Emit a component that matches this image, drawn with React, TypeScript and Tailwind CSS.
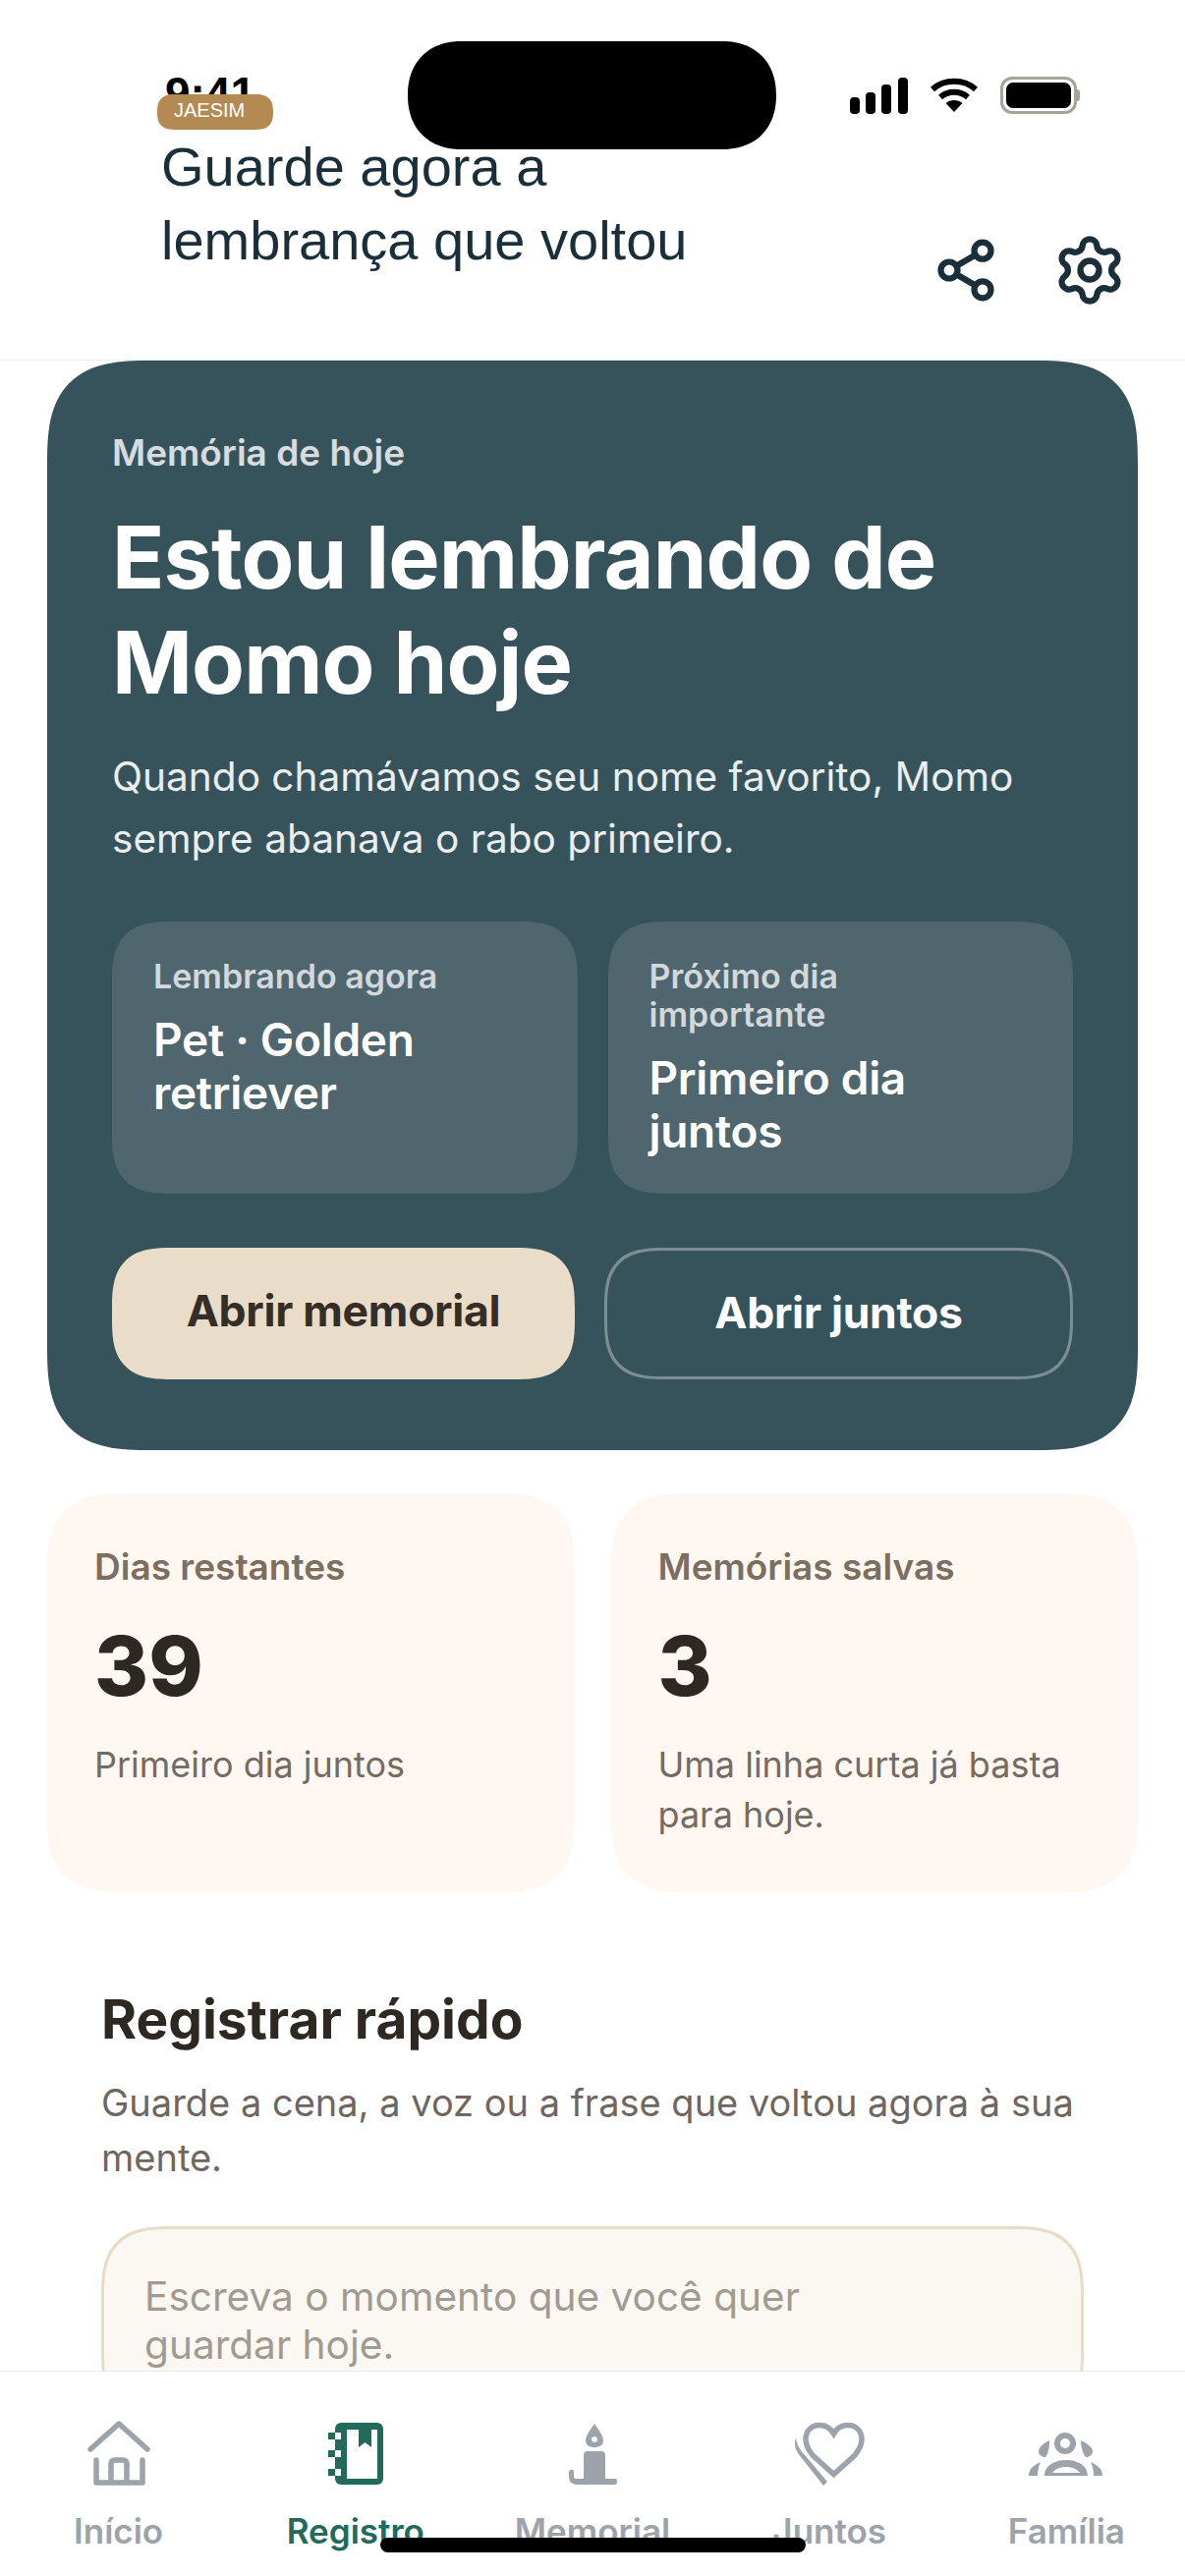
import { Settings, Share2 } from "lucide-react";

const GRAY = "#9ca3ab";
const GREEN = "#226a5a";

function HomeIcon() {
  return (
    <svg width="64" height="68" viewBox="0 0 64 68" fill="none" stroke={GRAY} strokeWidth="5.5" strokeLinecap="round" strokeLinejoin="round">
      <path d="M3 29 L32 3 L61 29" />
      <path d="M9 40 V63 H56 V40" />
      <path d="M24 62 V44 q0-4 4-4 h8 q4 0 4 4 V62" />
    </svg>
  );
}

function NotebookIcon() {
  return (
    <svg width="58" height="66" viewBox="0 0 58 66">
      <rect x="8" y="1" width="49" height="63" rx="6" fill={GREEN} />
      <rect x="20" y="8" width="31" height="50" fill="#fff" />
      <path d="M32 8 H45 V26 L38.5 21 L32 26 Z" fill={GREEN} />
      {[11, 29, 48].map((y) => (
        <g key={y}>
          <rect x="1" y={y} width="7" height="7" fill={GREEN} />
          <rect x="8" y={y} width="6" height="7" fill="#fff" />
        </g>
      ))}
    </svg>
  );
}

function CandleIcon() {
  return (
    <svg width="52" height="66" viewBox="0 0 52 66" fill={GRAY}>
      <path fillRule="evenodd" d="M28 2 C32 8 37 14 37 19 C37 24 33 26 28 26 C23 26 19 24 19 19 C19 14 24 8 28 2 Z M28 15 a3 3 0 1 0 .01 0 Z" />
      <path d="M17 34 q0-4 4-4 h14 q4 0 4 4 V58 H17 Z" />
      <path d="M4 49 q3-1 3 2 V56 q0 2 2 2 H49 q2 0 2 3 q0 3-2 3 H11 q-9 0-9-8 V51 q0-2 2-2 Z" />
    </svg>
  );
}

function HeartIcon() {
  return (
    <svg width="78" height="68" viewBox="0 0 78 68" fill="none">
      <path d="M43.5 13 C40 7 34 4.5 29 4.5 C20 4.5 15 11 15 19 C15 25 18 30 22 35 L43.5 54.5 L65 35 C69 30 72 25 72 19 C72 11 67 4.5 58 4.5 C53 4.5 47 7 43.5 13 Z" stroke={GRAY} strokeWidth="5.5" />
      <path d="M5 17 C2 26 6 32 11 38 L33 66 L37 62 L15 36 C9 30 6 25 5 17 Z" fill={GRAY} />
    </svg>
  );
}

function FamilyIcon() {
  return (
    <svg width="80" height="50" viewBox="0 0 80 50" fill={GRAY}>
      <circle cx="39" cy="14" r="8" fill="none" stroke={GRAY} strokeWidth="6" />
      <path d="M23 11 C18 13 12 18 12 22 C12 26 16 28 19 28 C22 24 23 18 23 11 Z" />
      <path d="M55 11 C60 13 67 18 67 22 C67 26 63 28 60 28 C57 24 55 18 55 11 Z" />
      <path fillRule="evenodd" d="M18 47 C18 37 28 31 40 31 C52 31 62 37 62 47 Z M26 44 H54 C51 40 46 38 40 38 C34 38 29 40 26 44 Z" />
      <path d="M2 47 C2 40 7 36 14 33 C12 37 11 42 11 47 Z" />
      <path d="M77 47 C77 40 72 36 65 33 C67 37 68 42 68 47 Z" />
    </svg>
  );
}

function StatusIcons() {
  return (
    <div className="absolute left-[865px] top-[78px] flex items-center gap-[22px]">
      <svg width="59" height="38" viewBox="0 0 59 38" fill="#000">
        <rect x="0" y="21" width="10" height="17" rx="4" />
        <rect x="16" y="16" width="10" height="22" rx="4" />
        <rect x="32" y="8" width="10" height="30" rx="4" />
        <rect x="49" y="1" width="10" height="37" rx="4" />
      </svg>
      <svg width="50" height="38" viewBox="0 0 50 38" fill="none" stroke="#000" strokeWidth="6">
        <path d="M3 13 C15 2 35 2 47 13" />
        <path d="M11 21 C19 14 31 14 39 21" />
        <path d="M25 36 L16.5 27 C21 23 29 23 33.5 27 Z" fill="#000" stroke="none" />
      </svg>
      <div className="flex items-center">
        <div className="w-[78px] h-[38px] rounded-[12px] border-[3px] border-[#a8a29a] p-[3px]">
          <div className="w-full h-full rounded-[7px] bg-black" />
        </div>
        <div className="w-[3px] h-[12px] rounded-r-full bg-[#a8a29a]" />
      </div>
    </div>
  );
}

function NavItem({ label, color, icon }: { label: string; color: string; icon: React.ReactNode }) {
  return (
    <div className="flex flex-col items-center">
      <div className="h-[68px] flex items-center justify-center">{icon}</div>
      <span className="mt-[24px] text-[35px] leading-[40px] font-semibold" style={{ color }}>
        {label}
      </span>
    </div>
  );
}

function InfoTile({ label, value }: { label: string; value: string }) {
  return (
    <div className="flex-1 rounded-[62px] [corner-shape:superellipse(1.5)] bg-[#4f666e] pl-[42px] pr-[60px] pt-[36px] pb-[36px]">
      <p className="text-[34px] leading-[39px] font-semibold text-white/75">{label}</p>
      <p className="mt-[18px] text-[46px] leading-[54px] font-semibold tracking-[-0.3px] text-white">{value}</p>
    </div>
  );
}

function StatCard({ label, value, sub }: { label: string; value: string; sub: string }) {
  return (
    <div className="flex-1 rounded-[80px] [corner-shape:superellipse(1.5)] bg-[#fff8f1] px-[48px] pt-[54px] h-[406px]">
      <p className="text-[37px] leading-[42px] font-semibold text-[#7d6e62]">{label}</p>
      <p className="mt-[32px] text-[84px] leading-[96px] font-extrabold text-[#2e2823]">{value}</p>
      <p className="mt-[27px] text-[36px] leading-[51px] text-[#746b62]">{sub}</p>
    </div>
  );
}

export default function App() {
  return (
    <div className="relative w-[1206px] h-[2622px] overflow-hidden bg-white flex flex-col font-['Inter',sans-serif]">
      <span className="absolute left-[168px] top-[67px] text-[46px] leading-[56px] font-bold text-black font-['Liberation_Sans',sans-serif]">9:41</span>
      <StatusIcons />

      <header className="relative h-[367px] shrink-0 border-b border-[#ececec] pl-[160px] pr-[59px] pt-[96px] flex justify-between font-['Liberation_Sans',sans-serif]">
        <div>
          <span className="flex items-start w-[118px] h-[36px] rounded-[18px] [corner-shape:superellipse(1.4)] bg-[#b38b52] pl-[17px] pt-[5px] text-[20px] leading-[22px] text-white">JAESIM</span>
          <h1 className="pl-[4px] text-[56px] leading-[75px] font-normal text-[#1b2f3b]">
            Guarde agora a
            <br />
            lembrança que voltou
          </h1>
        </div>
        <div className="flex items-center h-[76px] mt-[141px] gap-[54px] text-[#1b2f3b]">
          <Share2 size={68} strokeWidth={2.2} />
          <Settings size={76} strokeWidth={2} />
        </div>
      </header>

      <main className="flex-1 overflow-hidden">
        <section className="mx-[48px] rounded-[105px] [corner-shape:superellipse(1.5)] bg-[#36525b] px-[66px] pt-[72px] h-[1109px]">
          <p className="text-[37px] leading-[44px] font-semibold text-white/80">Memória de hoje</p>
          <h2 className="mt-[31px] text-[88px] leading-[107px] font-bold tracking-[-0.9px] text-white">
            Estou lembrando de
            <br />
            Momo hoje
          </h2>
          <p className="mt-[31px] text-[40.6px] leading-[63px] text-white/90">
            Quando chamávamos seu nome favorito, Momo sempre abanava o rabo primeiro.
          </p>
          <div className="mt-[53px] flex gap-[31px] h-[277px]">
            <InfoTile label="Lembrando agora" value="Pet · Golden retriever" />
            <InfoTile label="Próximo dia importante" value="Primeiro dia juntos" />
          </div>
          <div className="mt-[55px] flex gap-[30px] h-[134px]">
            <button className="w-[471px] pb-[5px] rounded-[62px] [corner-shape:superellipse(1.5)] bg-[#e9dcc9] text-[44.5px] font-bold tracking-[-0.3px] text-[#352d27]">Abrir memorial</button>
            <button className="flex-1 pb-[1px] rounded-[62px] [corner-shape:superellipse(1.5)] border-[3px] border-white/35 text-[44.5px] font-bold tracking-[-0.3px] text-white">Abrir juntos</button>
          </div>
        </section>

        <div className="mx-[48px] mt-[44px] flex gap-[37px]">
          <StatCard label="Dias restantes" value="39" sub="Primeiro dia juntos" />
          <StatCard label="Memórias salvas" value="3" sub="Uma linha curta já basta para hoje." />
        </div>

        <section className="mx-[103px] mt-[99px]">
          <h3 className="text-[55px] leading-[60px] font-bold text-[#2e2823]">Registrar rápido</h3>
          <p className="mt-[27px] text-[38px] leading-[56px] text-[#6f675f]">
            Guarde a cena, a voz ou a frase que voltou agora à sua mente.
          </p>
          <div className="mt-[42px] h-[200px] rounded-[72px] [corner-shape:superellipse(1.5)] border-[3px] border-[#e8dcc6] bg-[#fbf8f3] pl-[41px] pr-[150px] pt-[44px] text-[40.6px] leading-[49px] text-[#a19a90]">
            Escreva o momento que você quer guardar hoje.
          </div>
        </section>
      </main>

      <nav className="h-[209px] shrink-0 border-t border-[#ececec] bg-white grid grid-cols-5 pt-[50px]">
        <NavItem label="Início" color={GRAY} icon={<HomeIcon />} />
        <NavItem label="Registro" color={GREEN} icon={<NotebookIcon />} />
        <NavItem label="Memorial" color={GRAY} icon={<CandleIcon />} />
        <NavItem label="Juntos" color={GRAY} icon={<HeartIcon />} />
        <NavItem label="Família" color={GRAY} icon={<FamilyIcon />} />
      </nav>

      <div className="absolute left-[415px] top-[42px] w-[375px] h-[110px] rounded-[55px] [corner-shape:superellipse(1.15)] bg-black" />
      <div className="absolute left-[387px] top-[2583px] w-[433px] h-[15px] rounded-full bg-black" />
    </div>
  );
}
